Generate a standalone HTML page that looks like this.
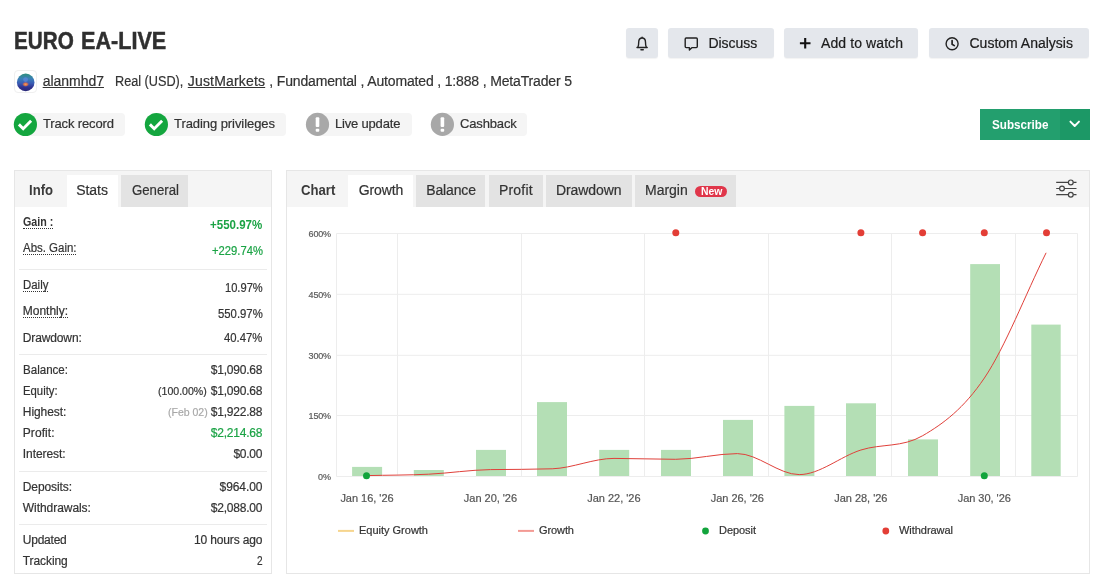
<!DOCTYPE html>
<html><head><meta charset="utf-8"><title>EURO EA-LIVE</title>
<style>
html,body{margin:0;padding:0;background:#fff;}
body{width:1102px;height:581px;position:relative;overflow:hidden;will-change:transform;font-family:"Liberation Sans",sans-serif;}
.t{position:absolute;white-space:nowrap;line-height:1;display:block;-webkit-text-stroke:0.2px;}
.b{position:absolute;box-sizing:border-box;}
.btn{background:#e4e7ec;border-radius:3px;box-shadow:0 1px 1px rgba(0,0,0,.05);}
.tab{background:#e3e3e3;}
.sep{height:1px;background:#ebebeb;left:19.3px;width:247.4px;}
svg{position:absolute;overflow:visible;}
.dot{height:0;border-bottom:1px dotted #333;}

</style></head><body>
<!-- top buttons -->
<div class="b btn" style="left:626.3px;top:27.9px;width:31.3px;height:30.5px;"></div>
<div class="b btn" style="left:668.2px;top:27.9px;width:105.8px;height:30.5px;"></div>
<div class="b btn" style="left:783.9px;top:27.9px;width:134.6px;height:30.5px;"></div>
<div class="b btn" style="left:929.2px;top:27.9px;width:159.6px;height:30.5px;"></div>
<svg style="left:0;top:0" width="1102" height="581" viewBox="0 0 1102 581">
  <!-- bell -->
  <g fill="none" stroke="#222" stroke-width="1.4" stroke-linecap="round" stroke-linejoin="round">
    <path d="M637 47.5 H647.2"/>
    <path d="M637.9 47.3 c0.7 -1.3 0.8 -2.7 0.8 -5 c0 -2.6 1.4 -4.3 3.4 -4.3 s3.4 1.7 3.4 4.3 c0 2.3 0.1 3.7 0.8 5"/>
    <path d="M642.1 37.6 v-0.3"/>
    <path d="M641 49.8 h2.2" stroke-width="1.6"/>
    <!-- comment -->
    <path d="M686.2 38 h10.1 a1 1 0 0 1 1 1 v7.6 a1 1 0 0 1 -1 1 h-4.2 l-2.7 2.5 v-2.5 h-3.2 a1 1 0 0 1 -1 -1 v-7.6 a1 1 0 0 1 1 -1 z"/>
    <!-- clock -->
    <circle cx="952.1" cy="43.7" r="6"/>
    <path d="M952.1 40.5 v3.7 l2.2 1.4" stroke-width="1.7"/>
  </g>
  <!-- plus -->
  <path d="M799.9 43.25 h10.6 M805.2 37.9 v10.7" stroke="#111" stroke-width="2.1" fill="none"/>
</svg>

<!-- avatar -->
<div class="b" style="left:14px;top:70px;width:23.4px;height:23.4px;border:1px solid #efefef;border-radius:4px;background:#fff;"></div>
<svg style="left:0;top:0" width="1102" height="581" viewBox="0 0 1102 581">
  <defs>
    <linearGradient id="av" x1="0" y1="0" x2="0" y2="1">
      <stop offset="0" stop-color="#2f8f7c"/><stop offset="0.3" stop-color="#3a7fb8"/><stop offset="0.55" stop-color="#3a5cb4"/><stop offset="0.8" stop-color="#2f2f8c"/><stop offset="1" stop-color="#2a2a78"/>
    </linearGradient>
    <radialGradient id="avc" cx="0.5" cy="0.5" r="0.5">
      <stop offset="0" stop-color="#f0a060"/><stop offset="0.5" stop-color="#d8704a"/><stop offset="1" stop-color="#8a5a90" stop-opacity="0"/>
    </radialGradient>
  </defs>
  <circle cx="25.7" cy="82.4" r="8.8" fill="url(#av)"/>
  <circle cx="25.6" cy="79.6" r="2.4" fill="#5a86d8" opacity="0.8"/>
  <ellipse cx="25.6" cy="84.3" rx="3.6" ry="2.6" fill="url(#avc)"/>
</svg>

<!-- badges -->
<div class="b" style="left:25px;top:113px;width:100px;height:23px;background:#f5f5f5;border-radius:0 4px 4px 0;"></div>
<div class="b" style="left:156px;top:113px;width:130px;height:23px;background:#f5f5f5;border-radius:0 4px 4px 0;"></div>
<div class="b" style="left:317px;top:113px;width:95px;height:23px;background:#f5f5f5;border-radius:0 4px 4px 0;"></div>
<div class="b" style="left:442px;top:113px;width:85px;height:23px;background:#f5f5f5;border-radius:0 4px 4px 0;"></div>
<svg style="left:0;top:0" width="1102" height="581" viewBox="0 0 1102 581">
  <circle cx="25.4" cy="124.5" r="11.6" fill="#14a63f"/>
  <path d="M18.9 124.4 l4.3 4.3 l7.9 -8" fill="none" stroke="#fff" stroke-width="2.9" stroke-linecap="butt" stroke-linejoin="miter"/>
  <circle cx="156.4" cy="124.5" r="11.6" fill="#14a63f"/>
  <path d="M149.9 124.4 l4.3 4.3 l7.9 -8" fill="none" stroke="#fff" stroke-width="2.9" stroke-linecap="butt" stroke-linejoin="miter"/>
  <circle cx="317.5" cy="124.4" r="11.6" fill="#a8a8a8"/>
  <rect x="315.7" y="117.2" width="3.6" height="9.8" rx="1" fill="#fff"/>
  <rect x="315.7" y="128.7" width="3.6" height="3.1" rx="1" fill="#fff"/>
  <circle cx="442.4" cy="124.4" r="11.6" fill="#a8a8a8"/>
  <rect x="440.6" y="117.2" width="3.6" height="9.8" rx="1" fill="#fff"/>
  <rect x="440.6" y="128.7" width="3.6" height="3.1" rx="1" fill="#fff"/>
</svg>

<!-- subscribe -->
<div class="b" style="left:980px;top:109px;width:80px;height:30.5px;background:#239f6e;"></div>
<div class="b" style="left:1060px;top:109px;width:29.8px;height:30.5px;background:#1c9866;"></div>
<svg style="left:0;top:0" width="1102" height="581" viewBox="0 0 1102 581">
  <path d="M1070.4 121.6 l4.3 4.4 l4.3 -4.4" fill="none" stroke="#fff" stroke-width="1.9" stroke-linecap="round" stroke-linejoin="round"/>
</svg>

<!-- left panel -->
<div class="b" style="left:14px;top:170px;width:258px;height:404px;border:1px solid #e6e6e6;background:#fff;"></div>
<div class="b" style="left:15px;top:171px;width:256px;height:35.8px;background:#f5f5f5;"></div>
<div class="b" style="left:66.6px;top:175.1px;width:51.8px;height:31.9px;background:#fff;"></div>
<div class="b tab" style="left:121px;top:175.1px;width:67px;height:31.7px;"></div>
<div class="b sep" style="top:269px;"></div>
<div class="b sep" style="top:354px;"></div>
<div class="b sep" style="top:471px;"></div>
<div class="b sep" style="top:523.5px;"></div>

<!-- right panel -->
<div class="b" style="left:286px;top:170px;width:804px;height:404px;border:1px solid #e6e6e6;background:#fff;"></div>
<div class="b" style="left:287px;top:171px;width:802px;height:35.8px;background:#f5f5f5;"></div>
<div class="b" style="left:347.7px;top:175.1px;width:64.9px;height:31.9px;background:#fff;"></div>
<div class="b tab" style="left:415.8px;top:175.1px;width:69.6px;height:31.7px;"></div>
<div class="b tab" style="left:489.1px;top:175.1px;width:53.5px;height:31.7px;"></div>
<div class="b tab" style="left:545.8px;top:175.1px;width:85.9px;height:31.7px;"></div>
<div class="b tab" style="left:635.2px;top:175.1px;width:101px;height:31.7px;"></div>
<div class="b" style="left:694.6px;top:186px;width:32.7px;height:10.8px;border-radius:6px;background:#e0364a;"></div>

<!-- chart -->
<svg style="left:0;top:0" width="1102" height="581" viewBox="0 0 1102 581">
  <g stroke="#ededed" stroke-width="1" fill="none">
    <path d="M336.5 233.5 H1077.5 M336.5 294.3 H1077.5 M336.5 355.3 H1077.5 M336.5 415.5 H1077.5 M336.5 476.5 H1077.5"/>
    <path d="M336.5 233.5 V476.5 M397.5 233.5 V476.5 M521.5 233.5 V476.5 M644.5 233.5 V476.5 M768.5 233.5 V476.5 M891.5 233.5 V476.5 M1015.5 233.5 V476.5 M1077.5 233.5 V476.5"/>
  </g>
  <g fill="#b4dfb5">
    <rect x="352.1" y="466.9" width="30" height="9.1"/>
    <rect x="413.8" y="470" width="30" height="6"/>
    <rect x="476" y="449.9" width="30" height="26.1"/>
    <rect x="537" y="402.1" width="30" height="73.9"/>
    <rect x="599.2" y="449.9" width="30" height="26.1"/>
    <rect x="661" y="449.9" width="30" height="26.1"/>
    <rect x="723" y="419.9" width="30" height="56.1"/>
    <rect x="784.4" y="405.9" width="30" height="70.1"/>
    <rect x="846" y="403.3" width="30" height="72.7"/>
    <rect x="908" y="439.4" width="30" height="36.6"/>
    <rect x="970.2" y="264.1" width="29.8" height="211.9"/>
    <rect x="1031.3" y="324.6" width="29.4" height="151.4"/>
  </g>
  <path id="gl" d="M367.0 475.6 C387.6 475.1 408.1 475.2 428.7 474.2 C449.3 473.2 469.9 469.9 490.5 469.6 C511.1 469.3 531.6 469.5 552.2 468.8 C572.8 468.1 593.4 458.4 614.0 458.4 C634.6 458.4 655.1 459.3 675.7 459.3 C696.3 459.3 716.8 453.6 737.4 453.6 C758.0 453.6 778.6 474.6 799.2 474.6 C819.8 474.6 840.3 456.5 860.9 450.0 C881.5 443.5 902.1 447.7 922.7 435.7 C943.3 423.7 963.8 408.5 984.4 378.0 C1005.0 347.5 1025.5 294.5 1046.1 252.8" fill="none" stroke="#e0403a" stroke-width="1"/>
  <g fill="#e33e36">
    <circle cx="675.8" cy="232.8" r="3.5"/><circle cx="860.9" cy="232.8" r="3.5"/><circle cx="922.6" cy="232.8" r="3.5"/><circle cx="984.3" cy="232.8" r="3.5"/><circle cx="1046.5" cy="232.8" r="3.5"/>
    <circle cx="885.8" cy="531" r="3.4"/>
  </g>
  <g fill="#12a43c">
    <circle cx="366.5" cy="475.8" r="3.5"/><circle cx="984.3" cy="475.8" r="3.5"/>
    <circle cx="705.5" cy="531" r="3.4"/>
  </g>
  <path d="M338 530.9 H354" stroke="#f6d58e" stroke-width="2"/>
  <path d="M518 530.9 H534" stroke="#f39a94" stroke-width="2"/>
  <!-- sliders icon -->
  <g fill="none" stroke="#444" stroke-width="1.2">
    <path d="M1056.2 182.4 H1068.3 M1073.3 182.4 H1076.5 M1056.2 188.5 H1059.5 M1064.5 188.5 H1076.5 M1056.2 194.7 H1068.3 M1073.3 194.7 H1076.5"/>
    <circle cx="1070.8" cy="182.4" r="2.4"/><circle cx="1062" cy="188.5" r="2.4"/><circle cx="1070.8" cy="194.7" r="2.4"/>
  </g>
</svg>

<div class="b dot" style="left:23.1px;top:228.0px;width:29.7px;"></div>
<div class="b dot" style="left:23.1px;top:254.0px;width:52.9px;"></div>
<div class="b dot" style="left:23.1px;top:291.0px;width:24.8px;"></div>
<div class="b dot" style="left:23.1px;top:317.0px;width:44.6px;"></div>
<span class="t" style="font-size:24.5px;font-weight:700;color:#2f2f2f;top:29.05px;left:13.70px;transform:scaleX(0.8447);transform-origin:0 50%;-webkit-text-stroke:0.5px;">EURO</span>
<span class="t" style="font-size:24.5px;font-weight:700;color:#2f2f2f;top:29.05px;left:81.20px;transform:scaleX(0.8815);transform-origin:0 50%;-webkit-text-stroke:0.5px;">EA-LIVE</span>
<span class="t" style="font-size:14px;font-weight:400;color:#1c1c1c;top:36.05px;left:708.40px;letter-spacing:-0.036px;">Discuss</span>
<span class="t" style="font-size:14px;font-weight:400;color:#1c1c1c;top:36.05px;left:821.00px;letter-spacing:0.097px;">Add to watch</span>
<span class="t" style="font-size:14px;font-weight:400;color:#1c1c1c;top:36.05px;left:969.50px;">Custom Analysis</span>
<span class="t" style="font-size:14px;font-weight:400;color:#333;top:74.05px;left:42.70px;letter-spacing:-0.029px;text-decoration:underline;text-underline-offset:1px;text-decoration-thickness:1px;">alanmhd7</span>
<span class="t" style="font-size:14px;font-weight:400;color:#333;top:74.05px;left:115.10px;transform:scaleX(0.9050);transform-origin:0 50%;">Real (USD),</span>
<span class="t" style="font-size:14px;font-weight:400;color:#333;top:74.05px;left:187.80px;letter-spacing:0.173px;text-decoration:underline;text-underline-offset:1px;text-decoration-thickness:1px;">JustMarkets</span>
<span class="t" style="font-size:14px;font-weight:400;color:#333;top:74.05px;left:269.30px;letter-spacing:-0.155px;">, Fundamental , Automated , 1:888 , MetaTrader 5</span>
<span class="t" style="font-size:13px;font-weight:400;color:#333;top:117.05px;left:43.00px;letter-spacing:-0.135px;">Track record</span>
<span class="t" style="font-size:13px;font-weight:400;color:#333;top:117.05px;left:174.00px;letter-spacing:-0.066px;">Trading privileges</span>
<span class="t" style="font-size:13px;font-weight:400;color:#333;top:117.05px;left:334.90px;letter-spacing:-0.173px;">Live update</span>
<span class="t" style="font-size:13px;font-weight:400;color:#333;top:117.05px;left:460.00px;letter-spacing:-0.145px;">Cashback</span>
<span class="t" style="font-size:13px;font-weight:700;color:#fff;top:118.05px;left:991.80px;transform:scaleX(0.8988);transform-origin:0 50%;-webkit-text-stroke:0;">Subscribe</span>
<span class="t" style="font-size:14px;font-weight:700;color:#3a3a3a;top:183.05px;left:28.90px;transform:scaleX(0.9354);transform-origin:0 50%;-webkit-text-stroke:0;">Info</span>
<span class="t" style="font-size:14px;font-weight:400;color:#333;top:183.05px;left:76.20px;letter-spacing:-0.027px;">Stats</span>
<span class="t" style="font-size:14px;font-weight:400;color:#333;top:183.05px;left:131.60px;transform:scaleX(0.9435);transform-origin:0 50%;">General</span>
<span class="t" style="font-size:14px;font-weight:700;color:#3a3a3a;top:183.05px;left:301.00px;transform:scaleX(0.9381);transform-origin:0 50%;-webkit-text-stroke:0;">Chart</span>
<span class="t" style="font-size:14px;font-weight:400;color:#333;top:183.05px;left:358.80px;letter-spacing:-0.125px;">Growth</span>
<span class="t" style="font-size:14px;font-weight:400;color:#333;top:183.05px;left:426.30px;letter-spacing:-0.149px;">Balance</span>
<span class="t" style="font-size:14px;font-weight:400;color:#333;top:183.05px;left:499.00px;letter-spacing:0.183px;">Profit</span>
<span class="t" style="font-size:14px;font-weight:400;color:#333;top:183.05px;left:556.00px;letter-spacing:-0.092px;">Drawdown</span>
<span class="t" style="font-size:14px;font-weight:400;color:#333;top:183.05px;left:645.00px;letter-spacing:-0.019px;">Margin</span>
<span class="t" style="font-size:10px;font-weight:700;color:#fff;top:187.05px;left:700.60px;transform:scaleX(1.0407);transform-origin:0 50%;-webkit-text-stroke:0;">New</span>
<span class="t" style="font-size:12px;font-weight:700;color:#333;top:216.05px;left:22.80px;transform:scaleX(0.8908);transform-origin:0 50%;-webkit-text-stroke:0;">Gain :</span>
<span class="t" style="font-size:12px;font-weight:700;color:#1ba345;top:219.05px;left:210.30px;transform:scaleX(0.9597);transform-origin:0 50%;-webkit-text-stroke:0;">+550.97%</span>
<span class="t" style="font-size:12px;font-weight:400;color:#333;top:242.05px;left:22.80px;transform:scaleX(0.9548);transform-origin:0 50%;">Abs. Gain:</span>
<span class="t" style="font-size:12px;font-weight:400;color:#1ba345;top:245.05px;left:211.60px;transform:scaleX(0.9358);transform-origin:0 50%;">+229.74%</span>
<span class="t" style="font-size:12px;font-weight:400;color:#333;top:279.05px;left:22.80px;transform:scaleX(0.9523);transform-origin:0 50%;">Daily</span>
<span class="t" style="font-size:12px;font-weight:400;color:#333;top:282.05px;left:224.80px;transform:scaleX(0.9262);transform-origin:0 50%;">10.97%</span>
<span class="t" style="font-size:12px;font-weight:400;color:#333;top:305.05px;left:22.80px;letter-spacing:-0.023px;">Monthly:</span>
<span class="t" style="font-size:12px;font-weight:400;color:#333;top:308.05px;left:217.80px;transform:scaleX(0.9435);transform-origin:0 50%;">550.97%</span>
<span class="t" style="font-size:12px;font-weight:400;color:#333;top:332.05px;left:22.80px;letter-spacing:-0.129px;">Drawdown:</span>
<span class="t" style="font-size:12px;font-weight:400;color:#333;top:332.05px;left:224.20px;transform:scaleX(0.9410);transform-origin:0 50%;">40.47%</span>
<span class="t" style="font-size:12px;font-weight:400;color:#333;top:364.05px;left:22.80px;transform:scaleX(0.9635);transform-origin:0 50%;">Balance:</span>
<span class="t" style="font-size:12px;font-weight:400;color:#333;top:364.05px;left:210.70px;letter-spacing:-0.199px;">$1,090.68</span>
<span class="t" style="font-size:12px;font-weight:400;color:#333;top:385.05px;left:22.80px;transform:scaleX(0.9431);transform-origin:0 50%;">Equity:</span>
<span class="t" style="font-size:12px;font-weight:400;color:#333;top:385.05px;left:210.70px;letter-spacing:-0.199px;">$1,090.68</span>
<span class="t" style="font-size:11px;font-weight:400;color:#333;top:386.05px;left:158.40px;transform:scaleX(0.9613);transform-origin:0 50%;">(100.00%)</span>
<span class="t" style="font-size:12px;font-weight:400;color:#333;top:406.05px;left:22.80px;letter-spacing:-0.076px;">Highest:</span>
<span class="t" style="font-size:12px;font-weight:400;color:#333;top:406.05px;left:210.70px;letter-spacing:-0.199px;">$1,922.88</span>
<span class="t" style="font-size:11px;font-weight:400;color:#a8a8a8;top:407.05px;left:167.50px;transform:scaleX(0.9548);transform-origin:0 50%;">(Feb 02)</span>
<span class="t" style="font-size:12px;font-weight:400;color:#333;top:427.05px;left:22.80px;letter-spacing:0.059px;">Profit:</span>
<span class="t" style="font-size:12px;font-weight:400;color:#1ba345;top:427.05px;left:210.70px;letter-spacing:-0.199px;">$2,214.68</span>
<span class="t" style="font-size:12px;font-weight:400;color:#333;top:448.05px;left:22.80px;letter-spacing:-0.082px;">Interest:</span>
<span class="t" style="font-size:12px;font-weight:400;color:#333;top:448.05px;left:233.40px;letter-spacing:-0.233px;">$0.00</span>
<span class="t" style="font-size:12px;font-weight:400;color:#333;top:481.05px;left:22.80px;letter-spacing:-0.091px;">Deposits:</span>
<span class="t" style="font-size:12px;font-weight:400;color:#333;top:481.05px;left:219.60px;letter-spacing:-0.082px;">$964.00</span>
<span class="t" style="font-size:12px;font-weight:400;color:#333;top:502.05px;left:22.80px;letter-spacing:-0.053px;">Withdrawals:</span>
<span class="t" style="font-size:12px;font-weight:400;color:#333;top:502.05px;left:210.70px;letter-spacing:-0.199px;">$2,088.00</span>
<span class="t" style="font-size:12px;font-weight:400;color:#333;top:534.05px;left:22.80px;letter-spacing:-0.229px;">Updated</span>
<span class="t" style="font-size:12px;font-weight:400;color:#333;top:534.05px;left:194.00px;letter-spacing:-0.142px;">10 hours ago</span>
<span class="t" style="font-size:12px;font-weight:400;color:#333;top:555.05px;left:22.80px;letter-spacing:-0.083px;">Tracking</span>
<span class="t" style="font-size:12px;font-weight:400;color:#333;top:555.05px;left:256.90px;transform:scaleX(0.8374);transform-origin:0 50%;">2</span>
<span class="t" style="font-size:9px;font-weight:400;color:#5a5a5a;top:230.05px;left:308.60px;letter-spacing:-0.210px;">600%</span>
<span class="t" style="font-size:9px;font-weight:400;color:#5a5a5a;top:291.05px;left:308.60px;letter-spacing:-0.210px;">450%</span>
<span class="t" style="font-size:9px;font-weight:400;color:#5a5a5a;top:352.05px;left:308.60px;letter-spacing:-0.210px;">300%</span>
<span class="t" style="font-size:9px;font-weight:400;color:#5a5a5a;top:412.05px;left:308.60px;letter-spacing:-0.210px;">150%</span>
<span class="t" style="font-size:9px;font-weight:400;color:#5a5a5a;top:473.05px;left:318.00px;letter-spacing:-0.016px;">0%</span>
<span class="t" style="font-size:11px;font-weight:400;color:#555;top:493.05px;left:340.40px;letter-spacing:-0.028px;">Jan 16, '26</span>
<span class="t" style="font-size:11px;font-weight:400;color:#555;top:493.05px;left:463.86px;letter-spacing:-0.028px;">Jan 20, '26</span>
<span class="t" style="font-size:11px;font-weight:400;color:#555;top:493.05px;left:587.32px;letter-spacing:-0.028px;">Jan 22, '26</span>
<span class="t" style="font-size:11px;font-weight:400;color:#555;top:493.05px;left:710.78px;letter-spacing:-0.028px;">Jan 26, '26</span>
<span class="t" style="font-size:11px;font-weight:400;color:#555;top:493.05px;left:834.24px;letter-spacing:-0.028px;">Jan 28, '26</span>
<span class="t" style="font-size:11px;font-weight:400;color:#555;top:493.05px;left:957.70px;letter-spacing:-0.028px;">Jan 30, '26</span>
<span class="t" style="font-size:11px;font-weight:400;color:#333;top:525.05px;left:359.00px;letter-spacing:-0.008px;">Equity Growth</span>
<span class="t" style="font-size:11px;font-weight:400;color:#333;top:525.05px;left:539.00px;letter-spacing:-0.094px;">Growth</span>
<span class="t" style="font-size:11px;font-weight:400;color:#333;top:525.05px;left:719.00px;letter-spacing:-0.049px;">Deposit</span>
<span class="t" style="font-size:11px;font-weight:400;color:#333;top:525.05px;left:899.00px;letter-spacing:-0.045px;">Withdrawal</span>
</body></html>
